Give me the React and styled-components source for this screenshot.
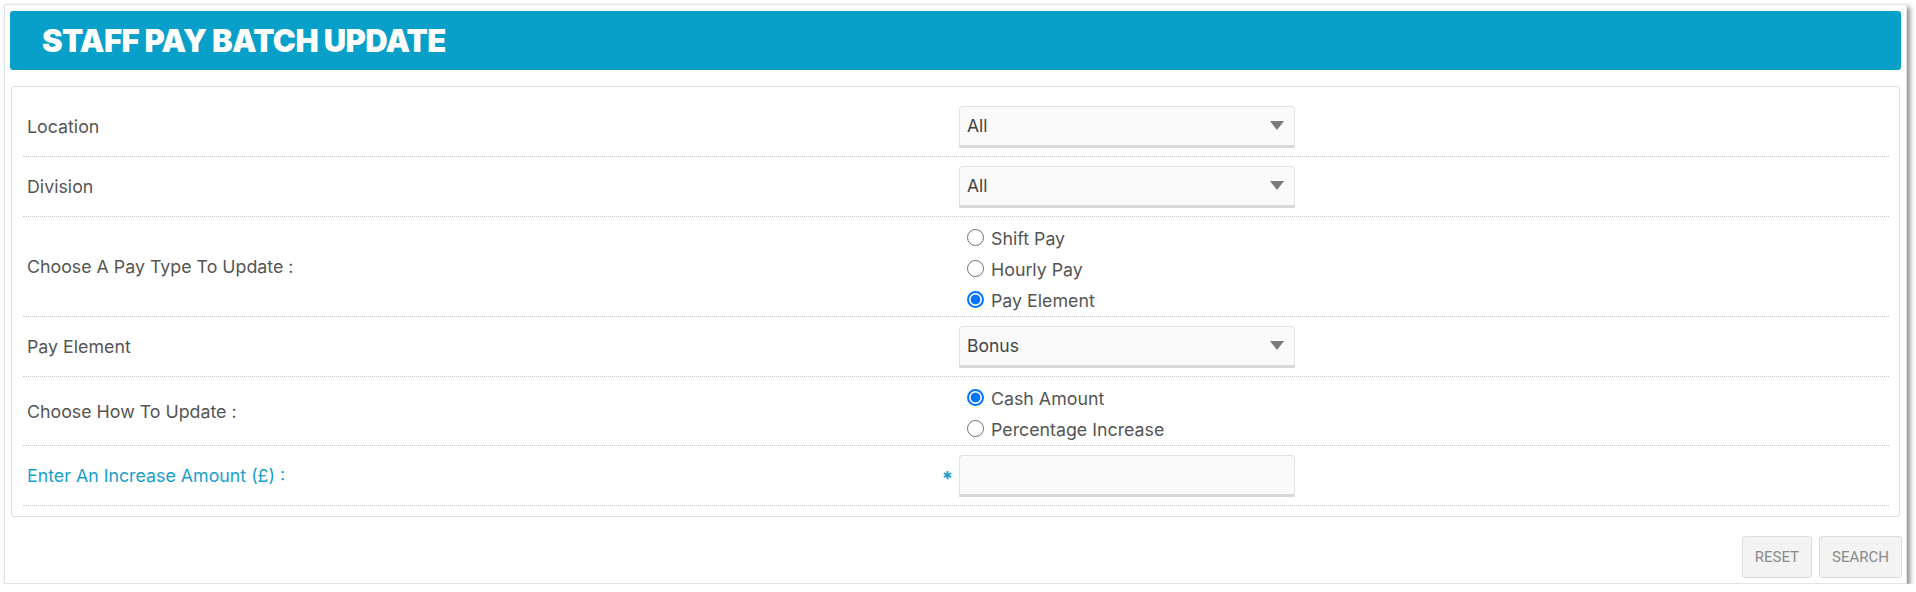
import React from "react"
import styled, { createGlobalStyle } from "styled-components"

const GlobalStyle = createGlobalStyle`
  body {
    margin: 0;
    background: #fff;
    font-family: Inter, "Noto Sans", sans-serif;
  }
`

const Card = styled.div`
  box-sizing: border-box;
  margin: 4px 0 0 4px;
  width: 1903px;
  height: 580px;
  padding: 6px 5px;
  background: #fff;
  border: 1px solid #e4e4e4;
  box-shadow: 3px 3px 5px rgba(0, 0, 0, 0.45);
`

const Header = styled.div`
  height: 59px;
  background: #08a0c8;
  border-radius: 3px;
  padding-left: 32px;
  display: flex;
  align-items: center;
`

const Title = styled.h1`
  margin: 0;
  color: #fff;
  font-family: Inter, sans-serif;
  font-weight: 900;
  font-size: 31px;
  letter-spacing: -0.6px;
`

const Panel = styled.div`
  margin: 16px 1px 0;
  border: 1px solid #dcdcdc;
  border-radius: 3px;
  padding: 10px 10px 10px 11px;
`

const Row = styled.div`
  display: grid;
  grid-template-columns: 936px 1fr;
  align-items: center;
  min-height: 60px;
  box-sizing: border-box;
  border-bottom: 1px dotted #c8c8c8;
`

const Label = styled.div`
  display: flex;
  justify-content: space-between;
  align-items: center;
  padding-left: 4px;
  padding-right: 6px;
  font-size: 17.8px;
  color: ${(p) => (p.$accent ? "#1a9fcc" : "#555")};
`

const Required = styled.span`
  color: #1a9fcc;
  font-size: 20px;
  font-weight: 700;
  margin-top: 6px;
`

const SelectBox = styled.div`
  box-sizing: border-box;
  width: 336px;
  height: 42px;
  display: flex;
  align-items: center;
  justify-content: space-between;
  padding: 0 10px 0 7px;
  background: #fafafa;
  border: 1px solid #e2e2e2;
  border-bottom: 3px solid #d8d8d8;
  border-radius: 4px 4px 0 0;
  font-size: 17.5px;
  color: #444;
`

const Caret = styled.span`
  width: 0;
  height: 0;
  border-left: 7px solid transparent;
  border-right: 7px solid transparent;
  border-top: 9px solid #7a7a7a;
`

const RadioGroup = styled.div`
  display: flex;
  flex-direction: column;
  padding: 6px 0 0 8px;
`

const Option = styled.label`
  display: flex;
  align-items: center;
  height: 31px;
  gap: 7px;
  font-size: 17.8px;
  color: #555;
`

const Dot = styled.span`
  box-sizing: border-box;
  width: 17px;
  height: 17px;
  border-radius: 50%;
  border: ${(p) => (p.$on ? "2px solid #0075ff" : "1.5px solid #6f6f6f")};
  background: ${(p) => (p.$on ? "radial-gradient(circle, #0075ff 0 4.6px, #fff 5.2px)" : "#fff")};
  margin-top: -3px;
`

const Footer = styled.div`
  display: flex;
  justify-content: flex-end;
  gap: 7px;
  margin: 19px -1px 0 0;
`

const Button = styled.button`
  height: 42px;
  padding: 0 12px;
  background: #f3f3f3;
  border: 1px solid #dcdcdc;
  border-radius: 3px;
  font-family: Roboto, "Liberation Sans", sans-serif;
  font-size: 15px;
  color: #8a8a8a;
`

const Select = ({ value }) => (
  <SelectBox>
    <span>{value}</span>
    <Caret />
  </SelectBox>
)

const Radios = ({ options, checked }) => (
  <RadioGroup>
    {options.map((o) => (
      <Option key={o}>
        <Dot $on={o === checked} />
        {o}
      </Option>
    ))}
  </RadioGroup>
)

const App = () => (
  <>
    <GlobalStyle />
    <Card>
      <Header>
        <Title>STAFF PAY BATCH UPDATE</Title>
      </Header>
      <Panel>
        <Row>
          <Label>Location</Label>
          <Select value="All" />
        </Row>
        <Row>
          <Label>Division</Label>
          <Select value="All" />
        </Row>
        <Row>
          <Label>Choose A Pay Type To Update :</Label>
          <Radios options={["Shift Pay", "Hourly Pay", "Pay Element"]} checked="Pay Element" />
        </Row>
        <Row>
          <Label>Pay Element</Label>
          <Select value="Bonus" />
        </Row>
        <Row>
          <Label>Choose How To Update :</Label>
          <Radios options={["Cash Amount", "Percentage Increase"]} checked="Cash Amount" />
        </Row>
        <Row>
          <Label $accent>
            <span>Enter An Increase Amount (£) :</span>
            <Required>*</Required>
          </Label>
          <SelectBox />
        </Row>
      </Panel>
      <Footer>
        <Button>RESET</Button>
        <Button>SEARCH</Button>
      </Footer>
    </Card>
  </>
)

export default App
